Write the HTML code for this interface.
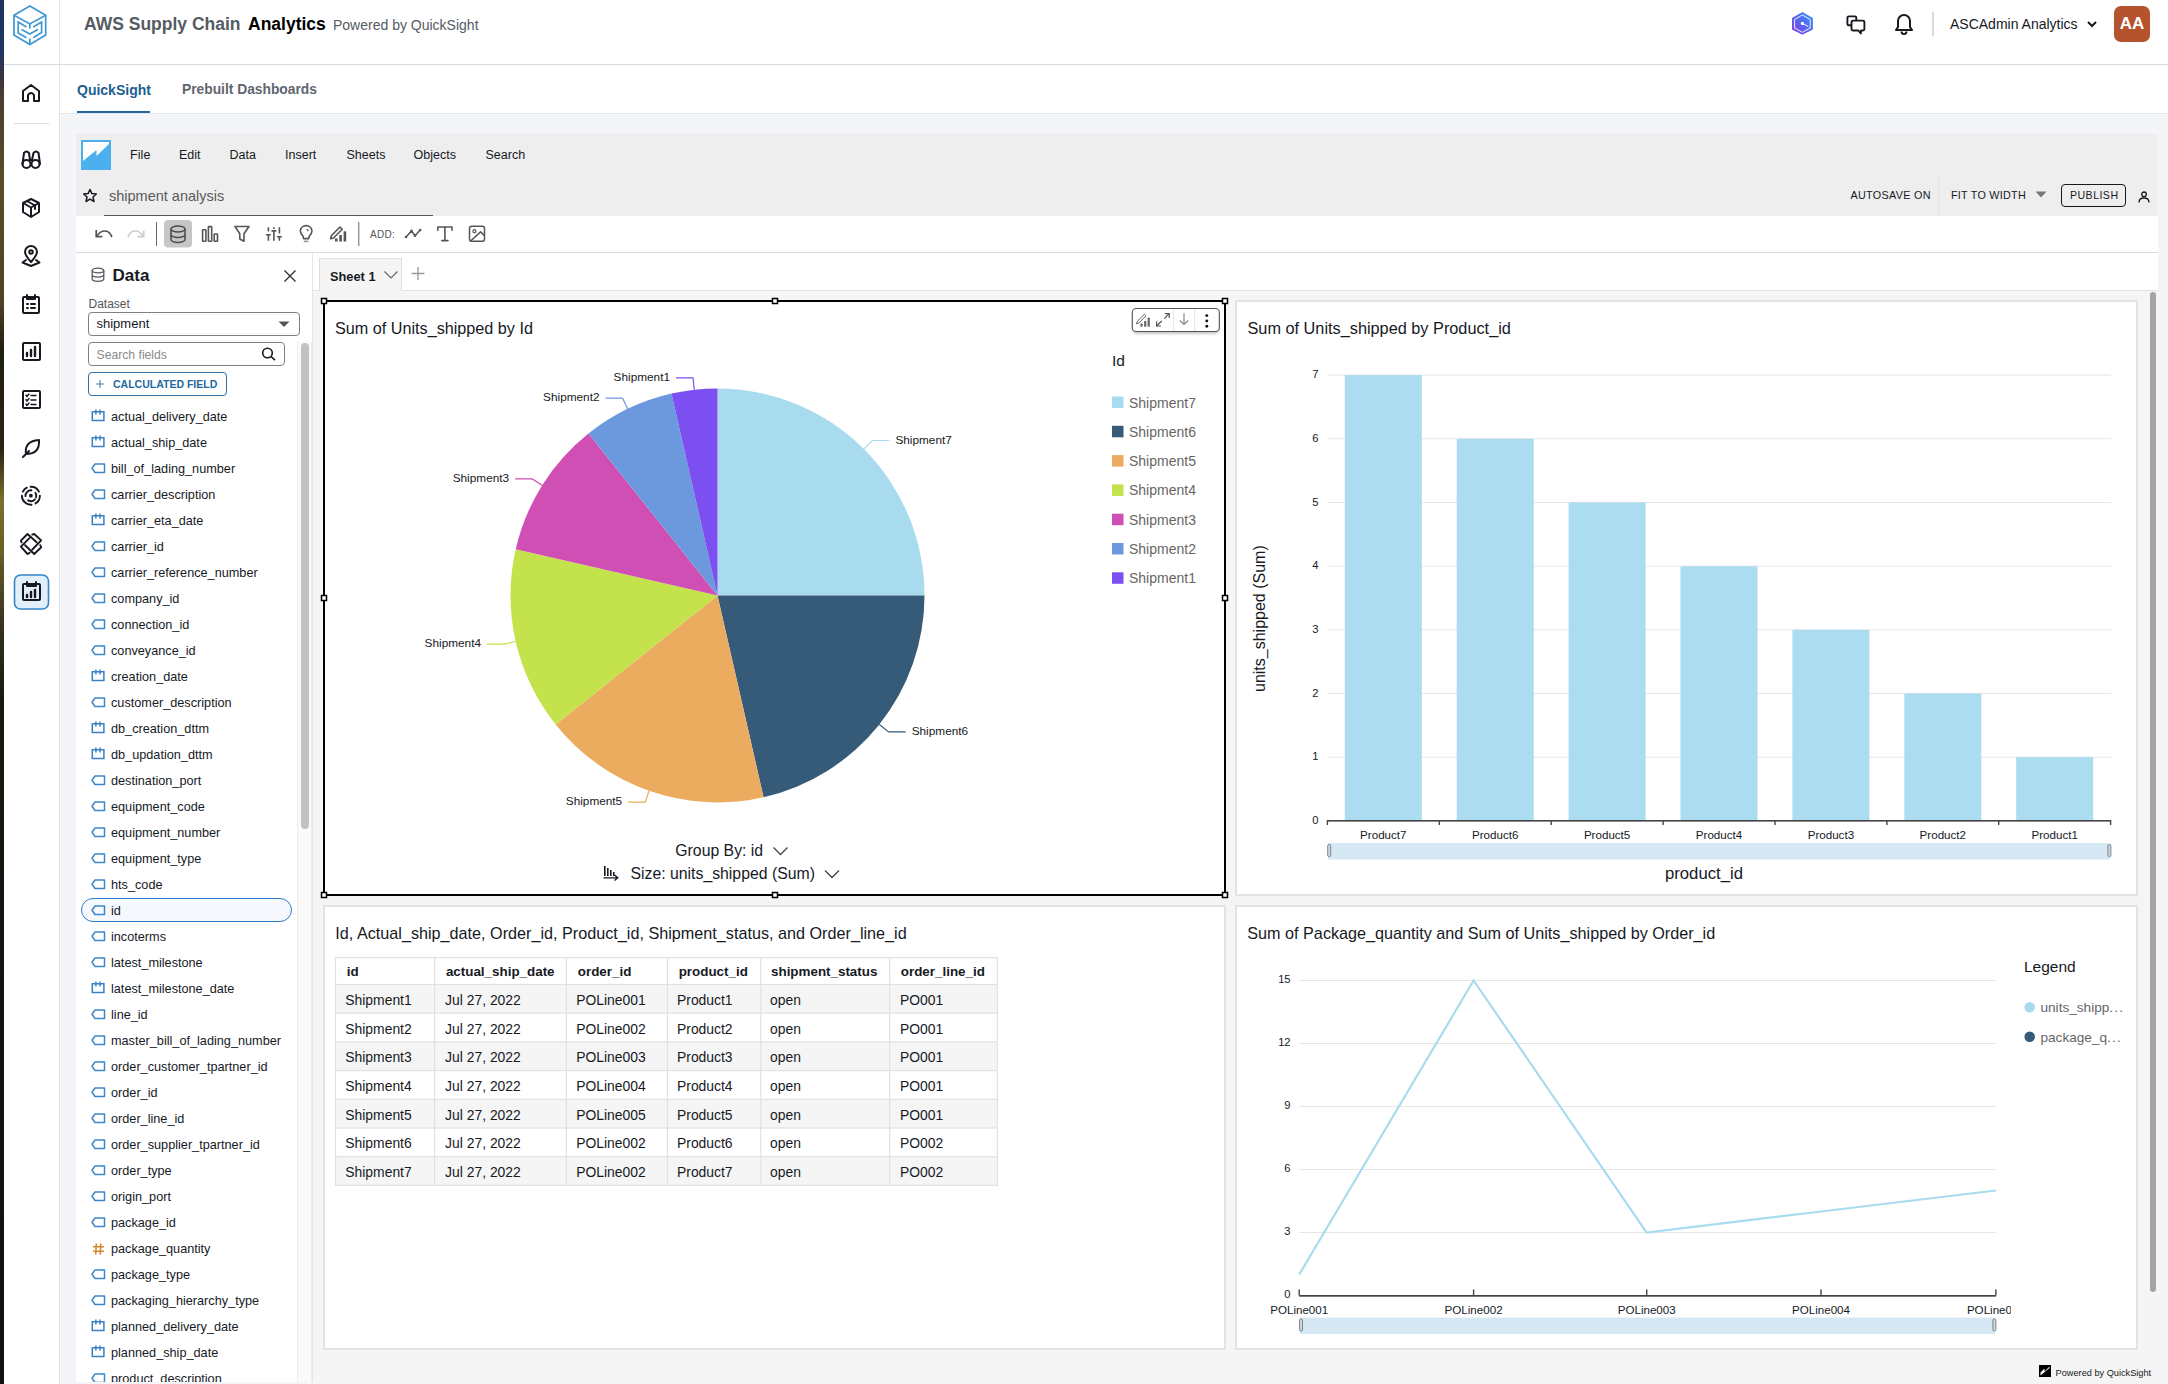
<!DOCTYPE html>
<html><head><meta charset="utf-8">
<style>
*{box-sizing:border-box;margin:0;padding:0}
html,body{width:2168px;height:1384px;overflow:hidden;background:#f4f5f9;font-family:"Liberation Sans",sans-serif;color:#16191f}
.abs{position:absolute}
#strip{left:0;top:0;width:4px;height:1384px;background:linear-gradient(#1e3462 0,#1f3664 52px,#3a3340 75px,#4a3f2e 100px,#5a4c26 180px,#4e4424 300px,#221d12 350px,#2a2414 450px,#7a7030 500px,#6a6028 550px,#3a3520 620px,#1a1810 700px,#15130e 1000px,#121110 1384px)}
#side{left:4px;top:0;width:56px;height:1384px;background:#fff;border-right:1px solid #e1e4e8}
#hdr{left:60px;top:0;width:2108px;height:65px;background:#fff;border-bottom:1px solid #d5dbe1}
#tabs{left:60px;top:65px;width:2108px;height:49px;background:#fff;border-bottom:1px solid #e3e6ea}
.t{position:absolute;white-space:nowrap;line-height:1}
#qs{left:76px;top:134px;width:2082px;height:1248px;background:#f5f5f5}
#menubar{left:0;top:0;width:2082px;height:82px;background:#eeeeee}
#toolbar{left:0;top:82px;width:2082px;height:37px;background:#fff;border-bottom:1px solid #dcdcdc}
#datap{left:0;top:119px;width:237px;height:1129px;background:#fff;border-right:1px solid #e6e6e6}
#sheettop{left:237px;top:119px;width:1845px;height:38px;background:#fff;border-bottom:1px solid #e4e4e4}
.vis{position:absolute;background:#fff;border:2px solid #e3e3e3}
</style></head><body>
<div id="strip" class="abs"></div>
<div id="side" class="abs"></div>
<svg class="abs" style="left:10px;top:2px" width="40" height="48" viewBox="10 2 40 48">
 <g fill="none" stroke="#3d97d3" stroke-width="1.7" stroke-linejoin="miter">
  <path d="M29.8 6 L45.7 15.2 L45.7 35 L29.8 44.5 L14 35 L14 15.2 Z"/>
  <path d="M14 15.2 L29.8 23.9 L45.7 15.2"/>
  <path d="M29.8 23.9 L29.8 28.4 M29.8 38.6 L29.8 44.5"/>
  <path d="M26.5 27 L18.2 22.1 L18.2 32.9 L26.5 37.7"/>
  <path d="M33.2 27 L41.6 22.1 L41.6 32.5 L33.2 37.7"/>
  <path d="M22.1 29.2 L22.1 29.7 L29.8 34.1 L37.4 29.7 L37.4 29"/>
 </g>
</svg>
<svg class="abs" style="left:4px;top:60px" width="56" height="560" viewBox="4 60 56 560">
 <g fill="none" stroke="#16191f" stroke-width="2" stroke-linejoin="round" stroke-linecap="round">
  <path d="M23 101 L23 91 L31 85 L39 91 L39 101 L34 101 L34 95 Q31 91 28 95 L28 101 Z"/>
  <circle cx="26.5" cy="164" r="4"/><circle cx="35.5" cy="164" r="4"/>
  <path d="M22.5 164 L24 153 Q26.5 150 29 153 L30 160 M40 164 L38.5 153 Q36 150 33.5 153 L32 160 M30 160 L32 160"/>
  <path d="M31 199 L39 203 L39 212 L31 217 L23 212 L23 203 Z M23 203 L31 207.5 L39 203 M31 207.5 L31 217 M27 201 L35 205.5 L35 209"/>
  <path d="M31 262 Q25 255 25 252 A6 6 0 0 1 37 252 Q37 255 31 262 Z"/><circle cx="31" cy="252" r="1.8"/>
  <path d="M26 260 L22.5 262.5 L31 266 L39.5 262.5 L36 260"/>
  <rect x="23" y="297" width="16" height="16" rx="1"/><path d="M27 295 L27 299 L35 299 L35 295 M27 304 L28 304 M31 304 L35 304 M27 308 L28 308 M31 308 L35 308"/>
  <rect x="23" y="343" width="17" height="17" rx="1"/><path d="M27 356 L27 353 M31 356 L31 350 M35 356 L35 347" stroke-width="2.4"/>
  <rect x="23" y="391" width="17" height="17" rx="1"/><path d="M26 395 L27 396.5 L29 394 M26 399.5 L27 401 L29 398.5 M26 404 L27 405.5 L29 403 M31 395.5 L36 395.5 M31 400 L36 400 M31 404.5 L36 404.5" stroke-width="1.4"/>
  <path d="M23 457 L29 451 M26 454 Q24 441 39 440 Q40 454 26 454"/>
  <path d="M22.88 491.61 A9.0 9.0 0 0 1 26.81 487.68 M30.59 486.71 A9.0 9.0 0 0 1 38.92 491.61 M39.90 495.70 A9.0 9.0 0 0 1 35.54 503.41 M31.53 504.68 A9.0 9.0 0 0 1 21.90 495.70 M25.51 496.08 A5.4 5.4 0 0 1 31.37 490.32 M35.43 492.76 A5.4 5.4 0 0 1 36.04 497.37 M34.91 499.31 A5.4 5.4 0 0 1 28.12 500.33" stroke-width="1.9"/><circle cx="30.9" cy="495.7" r="1.9" fill="#16191f" stroke="none"/>
  <path d="M20.9 540.7 L27.5 534 L36.6 542.2 M40.2 545.2 L41.2 547.3 L34.2 554 L25.1 545.2 M21.6 542.3 L20.9 540.7 M32.2 534.6 L34.2 534 L41.2 540.4 L32.4 549.5 M29.7 552.8 L27.5 554 L20.9 546.7 L29.4 538.2" stroke-width="1.9"/>
 </g>
 <rect x="14.5" y="575" width="34" height="34" rx="6" fill="#e1effb" stroke="#3584c8" stroke-width="1.6"/>
 <g fill="none" stroke="#16191f" stroke-width="2" stroke-linejoin="round" stroke-linecap="round">
  <rect x="23" y="584" width="17" height="16" rx="1"/><path d="M27 582 L27 586 L36 586 L36 582"/><path d="M27 597 L27 595 M31 597 L31 592 M35 597 L35 590" stroke-width="2.4"/>
  <path d="M14 123.5 L49 123.5" stroke="#dfe3e8" stroke-width="1"/>
 </g>
</svg>

<div id="hdr" class="abs"></div><div class="abs" style="left:4px;top:64px;width:56px;height:1px;background:#d5dbe1"></div>
<div class="t" style="left:84px;top:16px;font-size:17.5px;font-weight:bold;color:#545b64">AWS Supply Chain</div>
<div class="t" style="left:248px;top:16px;font-size:17.5px;font-weight:bold;color:#000">Analytics</div>
<div class="t" style="left:333px;top:18px;font-size:14px;color:#545b64">Powered by QuickSight</div>
<svg class="abs" style="left:1785px;top:5px" width="140" height="40" viewBox="1785 5 140 40">
 <defs><linearGradient id="hx" x1="1" y1="0" x2="0" y2="1"><stop offset="0" stop-color="#2f9bf5"/><stop offset="0.55" stop-color="#5a62ee"/><stop offset="1" stop-color="#8a3be6"/></linearGradient></defs>
 <path d="M1802.4 12 L1812.9 17.9 L1812.9 29.5 L1802.4 34.8 L1792 29.5 L1792 17.9 Z" fill="url(#hx)"/>
 <path d="M1802.4 15 L1810.2 19.5 L1810.2 28 L1802.4 32.3 L1794.6 28 L1794.6 19.5 Z" fill="none" stroke="#fff" stroke-width="0.9"/>
 <circle cx="1802.4" cy="23.4" r="1.6" fill="#fff"/><path d="M1802.4 23.4 L1808.3 26.6" stroke="#fff" stroke-width="1"/>
 <g fill="#fff" stroke="#16191f" stroke-width="1.9" stroke-linejoin="round">
  <rect x="1847.4" y="16.4" width="8.9" height="8.9" rx="1.3"/>
  <path d="M1853 20.6 L1862.9 20.6 Q1864.4 20.6 1864.4 22.1 L1864.4 29 Q1864.4 30.5 1862.9 30.5 L1861 30.5 L1860.8 33.4 L1858.4 30.5 L1853 30.5 Q1851.5 30.5 1851.5 29 L1851.5 22.1 Q1851.5 20.6 1853 20.6 Z"/>
 </g>
</svg>
<svg class="abs" style="left:1893px;top:12px" width="22" height="24" viewBox="0 0 22 24" fill="none" stroke="#16191f" stroke-width="2" stroke-linejoin="round">
 <path d="M3 18 L5 15 L5 9 A6 6 0 0 1 17 9 L17 15 L19 18 Z"/><path d="M8.5 19.5 A2.5 2.5 0 0 0 13.5 19.5"/>
</svg>
<div class="abs" style="left:1932px;top:12px;width:2px;height:24px;background:#d5dbe1"></div>
<div class="t" style="left:1950px;top:17px;font-size:14px;color:#16191f">ASCAdmin Analytics</div>
<svg class="abs" style="left:2086px;top:19px" width="12" height="10" viewBox="0 0 12 10" fill="none" stroke="#16191f" stroke-width="2"><path d="M2 3 L6 7 L10 3"/></svg>
<div class="abs" style="left:2114px;top:6px;width:36px;height:36px;border-radius:7px;background:#b5532e"></div>
<div class="t" style="left:2114px;top:15px;width:36px;text-align:center;font-size:17px;font-weight:bold;color:#fff">AA</div>

<div id="tabs" class="abs"></div>
<div class="t" style="left:77px;top:83px;font-size:14px;font-weight:bold;color:#1d5e91">QuickSight</div>
<div class="abs" style="left:77px;top:111px;width:73px;height:2px;background:#1f69a3"></div>
<div class="t" style="left:182px;top:83px;font-size:13.8px;font-weight:bold;color:#5f6670">Prebuilt Dashboards</div>

<div id="qs" class="abs">
  <div id="menubar" class="abs">
  <div class="abs" style="left:5px;top:6px;width:30px;height:30px;background:#4db0ee"></div>
  <svg class="abs" style="left:5px;top:6px" width="30" height="30" viewBox="0 0 30 30"><path d="M2 2 L28 2 L28 4 L15.5 16 L15.5 10 L2 21 Z" fill="#fff"/></svg>
  <div class="t" style="left:54px;top:15px;font-size:12.5px;color:#16191f;letter-spacing:0.1px">File</div>
  <div class="t" style="left:103px;top:15px;font-size:12.5px;color:#16191f">Edit</div>
  <div class="t" style="left:153.5px;top:15px;font-size:12.5px;color:#16191f">Data</div>
  <div class="t" style="left:209px;top:15px;font-size:12.5px;color:#16191f">Insert</div>
  <div class="t" style="left:270.5px;top:15px;font-size:12.5px;color:#16191f">Sheets</div>
  <div class="t" style="left:337.5px;top:15px;font-size:12.5px;color:#16191f">Objects</div>
  <div class="t" style="left:409.5px;top:15px;font-size:12.5px;color:#16191f">Search</div>
  <svg class="abs" style="left:6px;top:54px" width="16" height="16" viewBox="0 0 16 16"><path d="M8 1.5 L9.9 5.6 L14.3 6 L11 9 L12 13.5 L8 11.2 L4 13.5 L5 9 L1.7 6 L6.1 5.6 Z" fill="none" stroke="#16191f" stroke-width="1.5" stroke-linejoin="round"/></svg>
  <div class="t" style="left:33px;top:55px;font-size:14.5px;color:#5a5a5a">shipment analysis</div>
  <div class="abs" style="left:28px;top:81px;width:329px;height:1px;background:#555"></div>
  <div class="t" style="left:1774.5px;top:56px;font-size:10.8px;color:#16191f;letter-spacing:0.3px">AUTOSAVE ON</div>
  <div class="abs" style="left:1862px;top:41px;width:1px;height:41px;background:#e4e4e4"></div>
  <div class="t" style="left:1875px;top:56px;font-size:10.8px;color:#16191f;letter-spacing:0.25px">FIT TO WIDTH</div>
  <svg class="abs" style="left:1959px;top:57px" width="12" height="8" viewBox="0 0 12 8"><path d="M0.5 0.5 L11.5 0.5 L6 6.5 Z" fill="#777"/></svg>
  <div class="abs" style="left:1985px;top:50px;width:65px;height:23px;border:1.5px solid #16191f;border-radius:4px"></div>
  <div class="t" style="left:1994px;top:56px;font-size:10.6px;color:#16191f;letter-spacing:0.45px">PUBLISH</div>
  <svg class="abs" style="left:2062px;top:56.5px" width="12" height="12" viewBox="0 0 12 12" fill="none" stroke="#16191f" stroke-width="1.3"><circle cx="6" cy="3.3" r="2.3"/><path d="M1 11.5 Q1 7 6 7 Q11 7 11 11.5"/></svg>
</div>
  <div id="toolbar" class="abs">
 <svg class="abs" style="left:0;top:0" width="500" height="37" viewBox="76 216 500 37">
  <g fill="none" stroke-width="1.7" stroke-linecap="round" stroke-linejoin="round">
   <path d="M96.8 236.2 Q100 231 104.7 231 Q109.5 231 111.6 236.4" stroke="#555"/><path d="M96.2 230.6 L96.2 236.7 L101.6 236.7" stroke="#555"/>
   <path d="M128.3 236.4 Q130.5 231 135.3 231 Q140 231 143.2 236.2" stroke="#ccc"/><path d="M143.7 231 L143.7 236.7 L138.3 236.7" stroke="#ccc"/>
  </g>
  <rect x="156" y="222" width="1" height="24" fill="#6a6a6a"/>
  <rect x="164" y="220" width="28" height="27.5" rx="4" fill="#c6c6c6"/>
  <g fill="none" stroke="#4a4a4a" stroke-width="1.5">
   <ellipse cx="178" cy="229" rx="7" ry="3"/><path d="M171 229 L171 239.5 A7 3 0 0 0 185 239.5 L185 229 M171 234.5 A7 3 0 0 0 185 234.5"/>
  </g>
  <g fill="none" stroke="#555" stroke-width="1.6" stroke-linejoin="round">
   <rect x="202.6" y="229.8" width="3.3" height="11.5" rx="0.5"/><rect x="208.4" y="226.6" width="3.3" height="14.7" rx="0.5"/><rect x="214.2" y="234" width="3.3" height="7.3" rx="0.5"/>
   <path d="M235 226.5 L249 226.5 L244 233.8 L244 241.3 L239.8 239 L239.8 233.8 Z"/>
   <path d="M268.4 227.3 L268.4 231.5 M266 234.8 L270.8 234.8 M268.4 234.8 L268.4 240.8 M273.9 227.3 L273.9 229 M271.5 230.9 L276.3 230.9 M273.9 230.9 L273.9 240.8 M279.4 227.3 L279.4 233.5 M277 236.8 L281.8 236.8 M279.4 236.8 L279.4 240.8" stroke-linecap="butt"/>
   <path d="M303.6 238.6 L303 236 Q300.3 233.5 300.3 230.8 A5.9 5.9 0 0 1 312 230.8 Q312 233.5 309.3 236 L308.7 238.6 Z"/>
   <path d="M303.8 241.4 L308.4 241.4" stroke="#999"/>
   <path d="M306.8 229 L308.3 231.2" stroke-width="1.2"/>
   <path d="M330.6 238.6 L331.3 235.8 L340 227 L342.2 229.2 L333.5 238 Z"/>
  </g>
  <g fill="#555"><rect x="335" y="238.5" width="2.6" height="3"/><rect x="339.3" y="235" width="2.6" height="6.5"/><rect x="343.6" y="231.3" width="2.6" height="10.2"/></g>
  <rect x="358.3" y="222" width="1" height="24" fill="#6a6a6a"/>
  <text x="370" y="238" font-family="Liberation Sans" font-size="10" fill="#555" letter-spacing="0.3">ADD:</text>
  <g fill="none" stroke="#555" stroke-width="1.5" stroke-linejoin="round" stroke-linecap="round">
   <path d="M406 237 L411.5 230.9 L415 235.8 L420.2 230"/>
   <path d="M437.8 230.3 L437.8 227 L452 227 L452 230.3 M444.9 227 L444.9 240.6 M441.8 240.6 L448 240.6" stroke-width="1.6"/>
   <rect x="469.5" y="226.3" width="15" height="15" rx="2.3"/><circle cx="474.4" cy="231.2" r="1.5" stroke-width="1.2"/><path d="M470.6 241 L480.6 231.9 L484.3 235.4"/>
  </g>
  <g fill="#555"><circle cx="406" cy="237" r="1.3"/><circle cx="411.5" cy="230.9" r="1.3"/><circle cx="415" cy="235.8" r="1.3"/><circle cx="420.2" cy="230" r="1.3"/></g>
 </svg>
</div>
  <div id="datap" class="abs"></div>
  <div id="sheettop" class="abs"></div>
</div>
<div class="vis" style="left:323px;top:300px;width:903px;height:596px;border:2px solid #000"></div>
<div class="vis" style="left:1235px;top:300px;width:903px;height:596px"></div>
<div class="vis" style="left:323px;top:905px;width:903px;height:445px"></div>
<div class="vis" style="left:1235px;top:905px;width:903px;height:445px"></div>
<div class="abs" style="left:76px;top:253px;width:237px;height:1129px;overflow:hidden">
<svg class="abs" style="left:15px;top:14px" width="14" height="16" viewBox="0 0 14 16" fill="none" stroke="#545b64" stroke-width="1.3"><ellipse cx="7" cy="3.5" rx="5.8" ry="2.3"/><path d="M1.2 3.5 L1.2 12 A5.8 2.3 0 0 0 12.8 12 L12.8 3.5 M1.2 7.8 A5.8 2.3 0 0 0 12.8 7.8"/></svg>
<div class="t" style="left:36.5px;top:13.5px;font-size:17px;font-weight:bold;color:#16191f">Data</div>
<svg class="abs" style="left:207px;top:16px" width="14" height="14" viewBox="0 0 14 14" stroke="#333" stroke-width="1.4"><path d="M1.5 1.5 L12.5 12.5 M12.5 1.5 L1.5 12.5"/></svg>
<div class="t" style="left:12.5px;top:45px;font-size:12px;color:#545454">Dataset</div>
<div class="abs" style="left:12px;top:59px;width:212px;height:24px;border:1px solid #808080;border-radius:4px"></div>
<div class="t" style="left:20.5px;top:64px;font-size:13px;color:#16191f">shipment</div>
<svg class="abs" style="left:202px;top:68px" width="12" height="7" viewBox="0 0 12 7"><path d="M0.5 0.5 L11.5 0.5 L6 6 Z" fill="#555"/></svg>
<div class="abs" style="left:12px;top:89px;width:197px;height:24px;border:1px solid #808080;border-radius:4px"></div>
<div class="t" style="left:20.5px;top:95.5px;font-size:12.2px;color:#8a8a8a">Search fields</div>
<svg class="abs" style="left:185px;top:94px" width="16" height="15" viewBox="0 0 16 15" fill="none" stroke="#16191f" stroke-width="1.6"><circle cx="6.5" cy="6" r="4.8"/><path d="M10 9.5 L14 13.2"/></svg>
<div class="abs" style="left:12px;top:119px;width:139px;height:24px;border:1px solid #2f70a3;border-radius:4px"></div>
<svg class="abs" style="left:19px;top:126px" width="10" height="10" viewBox="0 0 10 10" stroke="#4a82ad" stroke-width="1.1"><path d="M5 1 L5 9 M1 5 L9 5"/></svg>
<div class="t" style="left:37px;top:125.7px;font-size:10.5px;font-weight:bold;color:#226a9e;letter-spacing:0px">CALCULATED FIELD</div>
<div class="abs" style="left:221px;top:89px;width:15px;height:1100px;background:#fafafa;border-left:1px solid #ececec;border-right:1px solid #ececec"></div>
<div class="abs" style="left:225px;top:90px;width:8px;height:486px;background:#c1c1c1;border-radius:4px"></div>
<svg class="abs" style="left:15px;top:155.8px" width="15" height="13" viewBox="0 0 15 13" fill="none" stroke="#3a80c2" stroke-width="1.5"><path d="M1.3 2.8 L12.9 2.8 L12.9 11.6 L1.3 11.6 Z M4.9 0.6 L4.9 5.6 M9 0.6 L9 5.6"/></svg>
<div class="t" style="left:35px;top:157.7px;font-size:12.7px;color:#16191f">actual_delivery_date</div>
<svg class="abs" style="left:15px;top:181.8px" width="15" height="13" viewBox="0 0 15 13" fill="none" stroke="#3a80c2" stroke-width="1.5"><path d="M1.3 2.8 L12.9 2.8 L12.9 11.6 L1.3 11.6 Z M4.9 0.6 L4.9 5.6 M9 0.6 L9 5.6"/></svg>
<div class="t" style="left:35px;top:183.7px;font-size:12.7px;color:#16191f">actual_ship_date</div>
<svg class="abs" style="left:15px;top:209.8px" width="15" height="11" viewBox="0 0 15 11" fill="none" stroke="#3d87c9" stroke-width="1.5" stroke-linejoin="round"><path d="M4 1 L13.5 1 L13.5 9.5 L4 9.5 L1 5.25 Z"/></svg>
<div class="t" style="left:35px;top:209.7px;font-size:12.7px;color:#16191f">bill_of_lading_number</div>
<svg class="abs" style="left:15px;top:235.8px" width="15" height="11" viewBox="0 0 15 11" fill="none" stroke="#3d87c9" stroke-width="1.5" stroke-linejoin="round"><path d="M4 1 L13.5 1 L13.5 9.5 L4 9.5 L1 5.25 Z"/></svg>
<div class="t" style="left:35px;top:235.7px;font-size:12.7px;color:#16191f">carrier_description</div>
<svg class="abs" style="left:15px;top:259.8px" width="15" height="13" viewBox="0 0 15 13" fill="none" stroke="#3a80c2" stroke-width="1.5"><path d="M1.3 2.8 L12.9 2.8 L12.9 11.6 L1.3 11.6 Z M4.9 0.6 L4.9 5.6 M9 0.6 L9 5.6"/></svg>
<div class="t" style="left:35px;top:261.69999999999993px;font-size:12.7px;color:#16191f">carrier_eta_date</div>
<svg class="abs" style="left:15px;top:287.8px" width="15" height="11" viewBox="0 0 15 11" fill="none" stroke="#3d87c9" stroke-width="1.5" stroke-linejoin="round"><path d="M4 1 L13.5 1 L13.5 9.5 L4 9.5 L1 5.25 Z"/></svg>
<div class="t" style="left:35px;top:287.69999999999993px;font-size:12.7px;color:#16191f">carrier_id</div>
<svg class="abs" style="left:15px;top:313.8px" width="15" height="11" viewBox="0 0 15 11" fill="none" stroke="#3d87c9" stroke-width="1.5" stroke-linejoin="round"><path d="M4 1 L13.5 1 L13.5 9.5 L4 9.5 L1 5.25 Z"/></svg>
<div class="t" style="left:35px;top:313.69999999999993px;font-size:12.7px;color:#16191f">carrier_reference_number</div>
<svg class="abs" style="left:15px;top:339.8px" width="15" height="11" viewBox="0 0 15 11" fill="none" stroke="#3d87c9" stroke-width="1.5" stroke-linejoin="round"><path d="M4 1 L13.5 1 L13.5 9.5 L4 9.5 L1 5.25 Z"/></svg>
<div class="t" style="left:35px;top:339.69999999999993px;font-size:12.7px;color:#16191f">company_id</div>
<svg class="abs" style="left:15px;top:365.8px" width="15" height="11" viewBox="0 0 15 11" fill="none" stroke="#3d87c9" stroke-width="1.5" stroke-linejoin="round"><path d="M4 1 L13.5 1 L13.5 9.5 L4 9.5 L1 5.25 Z"/></svg>
<div class="t" style="left:35px;top:365.69999999999993px;font-size:12.7px;color:#16191f">connection_id</div>
<svg class="abs" style="left:15px;top:391.8px" width="15" height="11" viewBox="0 0 15 11" fill="none" stroke="#3d87c9" stroke-width="1.5" stroke-linejoin="round"><path d="M4 1 L13.5 1 L13.5 9.5 L4 9.5 L1 5.25 Z"/></svg>
<div class="t" style="left:35px;top:391.69999999999993px;font-size:12.7px;color:#16191f">conveyance_id</div>
<svg class="abs" style="left:15px;top:415.8px" width="15" height="13" viewBox="0 0 15 13" fill="none" stroke="#3a80c2" stroke-width="1.5"><path d="M1.3 2.8 L12.9 2.8 L12.9 11.6 L1.3 11.6 Z M4.9 0.6 L4.9 5.6 M9 0.6 L9 5.6"/></svg>
<div class="t" style="left:35px;top:417.69999999999993px;font-size:12.7px;color:#16191f">creation_date</div>
<svg class="abs" style="left:15px;top:443.8px" width="15" height="11" viewBox="0 0 15 11" fill="none" stroke="#3d87c9" stroke-width="1.5" stroke-linejoin="round"><path d="M4 1 L13.5 1 L13.5 9.5 L4 9.5 L1 5.25 Z"/></svg>
<div class="t" style="left:35px;top:443.69999999999993px;font-size:12.7px;color:#16191f">customer_description</div>
<svg class="abs" style="left:15px;top:467.8px" width="15" height="13" viewBox="0 0 15 13" fill="none" stroke="#3a80c2" stroke-width="1.5"><path d="M1.3 2.8 L12.9 2.8 L12.9 11.6 L1.3 11.6 Z M4.9 0.6 L4.9 5.6 M9 0.6 L9 5.6"/></svg>
<div class="t" style="left:35px;top:469.69999999999993px;font-size:12.7px;color:#16191f">db_creation_dttm</div>
<svg class="abs" style="left:15px;top:493.8px" width="15" height="13" viewBox="0 0 15 13" fill="none" stroke="#3a80c2" stroke-width="1.5"><path d="M1.3 2.8 L12.9 2.8 L12.9 11.6 L1.3 11.6 Z M4.9 0.6 L4.9 5.6 M9 0.6 L9 5.6"/></svg>
<div class="t" style="left:35px;top:495.69999999999993px;font-size:12.7px;color:#16191f">db_updation_dttm</div>
<svg class="abs" style="left:15px;top:521.8px" width="15" height="11" viewBox="0 0 15 11" fill="none" stroke="#3d87c9" stroke-width="1.5" stroke-linejoin="round"><path d="M4 1 L13.5 1 L13.5 9.5 L4 9.5 L1 5.25 Z"/></svg>
<div class="t" style="left:35px;top:521.6999999999999px;font-size:12.7px;color:#16191f">destination_port</div>
<svg class="abs" style="left:15px;top:547.8px" width="15" height="11" viewBox="0 0 15 11" fill="none" stroke="#3d87c9" stroke-width="1.5" stroke-linejoin="round"><path d="M4 1 L13.5 1 L13.5 9.5 L4 9.5 L1 5.25 Z"/></svg>
<div class="t" style="left:35px;top:547.6999999999999px;font-size:12.7px;color:#16191f">equipment_code</div>
<svg class="abs" style="left:15px;top:573.8px" width="15" height="11" viewBox="0 0 15 11" fill="none" stroke="#3d87c9" stroke-width="1.5" stroke-linejoin="round"><path d="M4 1 L13.5 1 L13.5 9.5 L4 9.5 L1 5.25 Z"/></svg>
<div class="t" style="left:35px;top:573.6999999999999px;font-size:12.7px;color:#16191f">equipment_number</div>
<svg class="abs" style="left:15px;top:599.8px" width="15" height="11" viewBox="0 0 15 11" fill="none" stroke="#3d87c9" stroke-width="1.5" stroke-linejoin="round"><path d="M4 1 L13.5 1 L13.5 9.5 L4 9.5 L1 5.25 Z"/></svg>
<div class="t" style="left:35px;top:599.6999999999999px;font-size:12.7px;color:#16191f">equipment_type</div>
<svg class="abs" style="left:15px;top:625.8px" width="15" height="11" viewBox="0 0 15 11" fill="none" stroke="#3d87c9" stroke-width="1.5" stroke-linejoin="round"><path d="M4 1 L13.5 1 L13.5 9.5 L4 9.5 L1 5.25 Z"/></svg>
<div class="t" style="left:35px;top:625.6999999999999px;font-size:12.7px;color:#16191f">hts_code</div>
<div class="abs" style="left:5px;top:645px;width:211px;height:24px;border:1.3px solid #2b7bc4;border-radius:12px;background:#f5f9fe"></div>
<svg class="abs" style="left:15px;top:651.8px" width="15" height="11" viewBox="0 0 15 11" fill="none" stroke="#3d87c9" stroke-width="1.5" stroke-linejoin="round"><path d="M4 1 L13.5 1 L13.5 9.5 L4 9.5 L1 5.25 Z"/></svg>
<div class="t" style="left:35px;top:651.6999999999999px;font-size:12.7px;color:#16191f">id</div>
<svg class="abs" style="left:15px;top:677.8px" width="15" height="11" viewBox="0 0 15 11" fill="none" stroke="#3d87c9" stroke-width="1.5" stroke-linejoin="round"><path d="M4 1 L13.5 1 L13.5 9.5 L4 9.5 L1 5.25 Z"/></svg>
<div class="t" style="left:35px;top:677.6999999999999px;font-size:12.7px;color:#16191f">incoterms</div>
<svg class="abs" style="left:15px;top:703.8px" width="15" height="11" viewBox="0 0 15 11" fill="none" stroke="#3d87c9" stroke-width="1.5" stroke-linejoin="round"><path d="M4 1 L13.5 1 L13.5 9.5 L4 9.5 L1 5.25 Z"/></svg>
<div class="t" style="left:35px;top:703.6999999999999px;font-size:12.7px;color:#16191f">latest_milestone</div>
<svg class="abs" style="left:15px;top:727.8px" width="15" height="13" viewBox="0 0 15 13" fill="none" stroke="#3a80c2" stroke-width="1.5"><path d="M1.3 2.8 L12.9 2.8 L12.9 11.6 L1.3 11.6 Z M4.9 0.6 L4.9 5.6 M9 0.6 L9 5.6"/></svg>
<div class="t" style="left:35px;top:729.6999999999999px;font-size:12.7px;color:#16191f">latest_milestone_date</div>
<svg class="abs" style="left:15px;top:755.8px" width="15" height="11" viewBox="0 0 15 11" fill="none" stroke="#3d87c9" stroke-width="1.5" stroke-linejoin="round"><path d="M4 1 L13.5 1 L13.5 9.5 L4 9.5 L1 5.25 Z"/></svg>
<div class="t" style="left:35px;top:755.6999999999999px;font-size:12.7px;color:#16191f">line_id</div>
<svg class="abs" style="left:15px;top:781.8px" width="15" height="11" viewBox="0 0 15 11" fill="none" stroke="#3d87c9" stroke-width="1.5" stroke-linejoin="round"><path d="M4 1 L13.5 1 L13.5 9.5 L4 9.5 L1 5.25 Z"/></svg>
<div class="t" style="left:35px;top:781.7px;font-size:12.7px;color:#16191f">master_bill_of_lading_number</div>
<svg class="abs" style="left:15px;top:807.8px" width="15" height="11" viewBox="0 0 15 11" fill="none" stroke="#3d87c9" stroke-width="1.5" stroke-linejoin="round"><path d="M4 1 L13.5 1 L13.5 9.5 L4 9.5 L1 5.25 Z"/></svg>
<div class="t" style="left:35px;top:807.7px;font-size:12.7px;color:#16191f">order_customer_tpartner_id</div>
<svg class="abs" style="left:15px;top:833.8px" width="15" height="11" viewBox="0 0 15 11" fill="none" stroke="#3d87c9" stroke-width="1.5" stroke-linejoin="round"><path d="M4 1 L13.5 1 L13.5 9.5 L4 9.5 L1 5.25 Z"/></svg>
<div class="t" style="left:35px;top:833.7px;font-size:12.7px;color:#16191f">order_id</div>
<svg class="abs" style="left:15px;top:859.8px" width="15" height="11" viewBox="0 0 15 11" fill="none" stroke="#3d87c9" stroke-width="1.5" stroke-linejoin="round"><path d="M4 1 L13.5 1 L13.5 9.5 L4 9.5 L1 5.25 Z"/></svg>
<div class="t" style="left:35px;top:859.7px;font-size:12.7px;color:#16191f">order_line_id</div>
<svg class="abs" style="left:15px;top:885.8px" width="15" height="11" viewBox="0 0 15 11" fill="none" stroke="#3d87c9" stroke-width="1.5" stroke-linejoin="round"><path d="M4 1 L13.5 1 L13.5 9.5 L4 9.5 L1 5.25 Z"/></svg>
<div class="t" style="left:35px;top:885.7px;font-size:12.7px;color:#16191f">order_supplier_tpartner_id</div>
<svg class="abs" style="left:15px;top:911.8px" width="15" height="11" viewBox="0 0 15 11" fill="none" stroke="#3d87c9" stroke-width="1.5" stroke-linejoin="round"><path d="M4 1 L13.5 1 L13.5 9.5 L4 9.5 L1 5.25 Z"/></svg>
<div class="t" style="left:35px;top:911.7px;font-size:12.7px;color:#16191f">order_type</div>
<svg class="abs" style="left:15px;top:937.8px" width="15" height="11" viewBox="0 0 15 11" fill="none" stroke="#3d87c9" stroke-width="1.5" stroke-linejoin="round"><path d="M4 1 L13.5 1 L13.5 9.5 L4 9.5 L1 5.25 Z"/></svg>
<div class="t" style="left:35px;top:937.7px;font-size:12.7px;color:#16191f">origin_port</div>
<svg class="abs" style="left:15px;top:963.8px" width="15" height="11" viewBox="0 0 15 11" fill="none" stroke="#3d87c9" stroke-width="1.5" stroke-linejoin="round"><path d="M4 1 L13.5 1 L13.5 9.5 L4 9.5 L1 5.25 Z"/></svg>
<div class="t" style="left:35px;top:963.7px;font-size:12.7px;color:#16191f">package_id</div>
<svg class="abs" style="left:15.5px;top:989.8px" width="13" height="12" viewBox="0 0 13 12" fill="none" stroke="#d5892f" stroke-width="1.6"><path d="M4.3 0.5 L3.7 11.5 M8.8 0.5 L8.2 11.5 M1 3.8 L12 3.8 M1 8.2 L12 8.2"/></svg>
<div class="t" style="left:35px;top:989.7px;font-size:12.7px;color:#16191f">package_quantity</div>
<svg class="abs" style="left:15px;top:1015.8px" width="15" height="11" viewBox="0 0 15 11" fill="none" stroke="#3d87c9" stroke-width="1.5" stroke-linejoin="round"><path d="M4 1 L13.5 1 L13.5 9.5 L4 9.5 L1 5.25 Z"/></svg>
<div class="t" style="left:35px;top:1015.7px;font-size:12.7px;color:#16191f">package_type</div>
<svg class="abs" style="left:15px;top:1041.8px" width="15" height="11" viewBox="0 0 15 11" fill="none" stroke="#3d87c9" stroke-width="1.5" stroke-linejoin="round"><path d="M4 1 L13.5 1 L13.5 9.5 L4 9.5 L1 5.25 Z"/></svg>
<div class="t" style="left:35px;top:1041.7px;font-size:12.7px;color:#16191f">packaging_hierarchy_type</div>
<svg class="abs" style="left:15px;top:1065.8px" width="15" height="13" viewBox="0 0 15 13" fill="none" stroke="#3a80c2" stroke-width="1.5"><path d="M1.3 2.8 L12.9 2.8 L12.9 11.6 L1.3 11.6 Z M4.9 0.6 L4.9 5.6 M9 0.6 L9 5.6"/></svg>
<div class="t" style="left:35px;top:1067.7px;font-size:12.7px;color:#16191f">planned_delivery_date</div>
<svg class="abs" style="left:15px;top:1091.8px" width="15" height="13" viewBox="0 0 15 13" fill="none" stroke="#3a80c2" stroke-width="1.5"><path d="M1.3 2.8 L12.9 2.8 L12.9 11.6 L1.3 11.6 Z M4.9 0.6 L4.9 5.6 M9 0.6 L9 5.6"/></svg>
<div class="t" style="left:35px;top:1093.7px;font-size:12.7px;color:#16191f">planned_ship_date</div>
<svg class="abs" style="left:15px;top:1119.8px" width="15" height="11" viewBox="0 0 15 11" fill="none" stroke="#3d87c9" stroke-width="1.5" stroke-linejoin="round"><path d="M4 1 L13.5 1 L13.5 9.5 L4 9.5 L1 5.25 Z"/></svg>
<div class="t" style="left:35px;top:1119.7px;font-size:12.7px;color:#16191f">product_description</div>
</div>

<div class="abs" style="left:319px;top:258px;width:83px;height:33px;background:#f5f5f5;border:1px solid #dedede;border-bottom:none"></div>
<div class="t" style="left:330px;top:271px;font-size:12.8px;font-weight:bold;color:#16191f">Sheet 1</div>
<svg class="abs" style="left:383px;top:270px" width="16" height="10" viewBox="0 0 16 10" fill="none" stroke="#666" stroke-width="1.2"><path d="M1.5 1.5 L8 8 L14.5 1.5"/></svg>
<svg class="abs" style="left:410px;top:266px" width="16" height="16" viewBox="0 0 16 16" stroke="#999" stroke-width="1.3"><path d="M8 1 L8 14 M1.5 7.5 L14.5 7.5"/></svg>
<svg class="abs" style="left:0;top:0" width="1240" height="900" viewBox="0 0 1240 900" font-family="Liberation Sans">
 <path d="M717.5 595.4 L717.50 388.40 A207 207 0 0 1 924.50 595.40 Z" fill="#a9dbef"/><path d="M717.5 595.4 L924.50 595.40 A207 207 0 0 1 763.56 797.21 Z" fill="#365b78"/><path d="M717.5 595.4 L763.56 797.21 A207 207 0 0 1 555.66 724.46 Z" fill="#ebac5f"/><path d="M717.5 595.4 L555.66 724.46 A207 207 0 0 1 515.69 549.34 Z" fill="#c4e24b"/><path d="M717.5 595.4 L515.69 549.34 A207 207 0 0 1 588.44 433.56 Z" fill="#d04fb4"/><path d="M717.5 595.4 L588.44 433.56 A207 207 0 0 1 671.44 393.59 Z" fill="#6c99dd"/><path d="M717.5 595.4 L671.44 393.59 A207 207 0 0 1 717.50 388.40 Z" fill="#7c4ff1"/>
 <path d="M863.9 449.0 L872.4 440.5 L889.4 440.5" fill="none" stroke="#a9dbef" stroke-width="1.2"/><text x="895.4" y="443.8" font-size="11.8" fill="#16191f" text-anchor="start">Shipment7</text><path d="M879.3 724.5 L888.7 731.9 L905.7 731.9" fill="none" stroke="#365b78" stroke-width="1.2"/><text x="911.7" y="735.2" font-size="11.8" fill="#16191f" text-anchor="start">Shipment6</text><path d="M649.1 790.8 L645.2 802.1 L628.2 802.1" fill="none" stroke="#ebac5f" stroke-width="1.2"/><text x="622.2" y="805.4" font-size="11.8" fill="#16191f" text-anchor="end">Shipment5</text><path d="M515.7 641.5 L504.0 644.1 L487.0 644.1" fill="none" stroke="#c4e24b" stroke-width="1.2"/><text x="481.0" y="647.4" font-size="11.8" fill="#16191f" text-anchor="end">Shipment4</text><path d="M542.2 485.3 L532.1 478.9 L515.1 478.9" fill="none" stroke="#d04fb4" stroke-width="1.2"/><text x="509.1" y="482.2" font-size="11.8" fill="#16191f" text-anchor="end">Shipment3</text><path d="M627.7 408.9 L622.5 398.1 L605.5 398.1" fill="none" stroke="#6c99dd" stroke-width="1.2"/><text x="599.5" y="401.4" font-size="11.8" fill="#16191f" text-anchor="end">Shipment2</text><path d="M694.3 389.7 L693.0 377.8 L676.0 377.8" fill="none" stroke="#7c4ff1" stroke-width="1.2"/><text x="670.0" y="381.1" font-size="11.8" fill="#16191f" text-anchor="end">Shipment1</text>
 <text x="1112" y="366" font-size="15.5" fill="#16191f">Id</text>
 <rect x="1112" y="396.5" width="11.5" height="11.5" fill="#a9dbef"/><text x="1129" y="407.5" font-size="14" fill="#666">Shipment7</text><rect x="1112" y="425.8" width="11.5" height="11.5" fill="#365b78"/><text x="1129" y="436.8" font-size="14" fill="#666">Shipment6</text><rect x="1112" y="455.1" width="11.5" height="11.5" fill="#ebac5f"/><text x="1129" y="466.1" font-size="14" fill="#666">Shipment5</text><rect x="1112" y="484.4" width="11.5" height="11.5" fill="#c4e24b"/><text x="1129" y="495.4" font-size="14" fill="#666">Shipment4</text><rect x="1112" y="513.7" width="11.5" height="11.5" fill="#d04fb4"/><text x="1129" y="524.7" font-size="14" fill="#666">Shipment3</text><rect x="1112" y="543.0" width="11.5" height="11.5" fill="#6c99dd"/><text x="1129" y="554.0" font-size="14" fill="#666">Shipment2</text><rect x="1112" y="572.3" width="11.5" height="11.5" fill="#7c4ff1"/><text x="1129" y="583.3" font-size="14" fill="#666">Shipment1</text>
 <text x="335" y="334" font-size="16.2" fill="#16191f">Sum of Units_shipped by Id</text>
 <text x="675.3" y="856" font-size="15.8" fill="#16191f">Group By: id</text>
 <path d="M773.5 847.5 L780.5 854.5 L787.5 847.5" fill="none" stroke="#444" stroke-width="1.3"/>
 <text x="630.5" y="879" font-size="15.8" fill="#16191f">Size: units_shipped (Sum)</text>
 <path d="M825 870.5 L832 877.5 L839 870.5" fill="none" stroke="#444" stroke-width="1.3"/>
 <g fill="#16191f"><rect x="604" y="866" width="1.6" height="10"/><rect x="607" y="868" width="1.6" height="8"/><rect x="610" y="870" width="1.6" height="6"/><rect x="613" y="872" width="1.6" height="4"/></g>
 <path d="M603.5 877.8 L617.5 877.8 M614.5 875 L617.8 877.8 L614.5 880.6" fill="none" stroke="#16191f" stroke-width="1.3"/>
 <g>
  <defs><filter id="shb" x="-20%" y="-50%" width="140%" height="200%"><feGaussianBlur stdDeviation="1.6"/></filter></defs><rect x="1133" y="310.5" width="86" height="23" rx="4" fill="#000" opacity="0.28" filter="url(#shb)"/><rect x="1132.3" y="308.5" width="87" height="23" rx="3.8" fill="#fff" stroke="#555" stroke-width="1.1"/>
  <path d="M1173.7 309.2 L1173.7 331 M1194.6 309.2 L1194.6 331" stroke="#e0e0e0" stroke-width="0.9"/>
  <g fill="none" stroke="#666" stroke-width="1" stroke-linejoin="round">
   <path d="M1136.4 323.8 L1137.4 321.2 L1144.4 314.3 L1146 315.9 L1139 322.8 Z"/>
  </g>
  <g fill="#666"><rect x="1140.4" y="323.5" width="2.2" height="3.2" rx="0.8"/><rect x="1144.1" y="321" width="2.2" height="5.7" rx="0.5"/><rect x="1147.6" y="317.4" width="2.2" height="9.3" rx="0.5"/></g>
  <g fill="none" stroke="#555" stroke-width="1.2" stroke-linecap="butt">
   <path d="M1156.6 326 L1161.7 321 M1164.3 318.6 L1169.2 313.6"/>
   <path d="M1156.6 321.5 L1156.6 326 L1161 326 M1164.8 313.6 L1169.2 313.6 L1169.2 318"/>
  </g>
  <path d="M1184 313.2 L1184 324.5 M1179.8 320.5 L1184 324.5 L1188.2 320.5" fill="none" stroke="#8a8a8a" stroke-width="1.2"/>
  <g fill="#111"><circle cx="1206.8" cy="315.6" r="1.45"/><circle cx="1206.8" cy="321" r="1.45"/><circle cx="1206.8" cy="326.3" r="1.45"/></g>
 <g fill="#fff" stroke="#000" stroke-width="1.5">
  <rect x="321.5" y="298.5" width="5" height="5"/><rect x="772.5" y="298.5" width="5" height="5"/><rect x="1222.5" y="298.5" width="5" height="5"/>
  <rect x="321.5" y="595.5" width="5" height="5"/><rect x="1222.5" y="595.5" width="5" height="5"/>
  <rect x="321.5" y="892.5" width="5" height="5"/><rect x="772.5" y="892.5" width="5" height="5"/><rect x="1222.5" y="892.5" width="5" height="5"/>
 </g>
</svg>

<svg class="abs" style="left:0;top:0" width="2168" height="1384" viewBox="0 0 2168 1384" font-family="Liberation Sans">
<text x="1247.5" y="334" font-size="16.3" fill="#16191f">Sum of Units_shipped by Product_id</text>
<text x="1318.5" y="823.9" font-size="11.2" fill="#16191f" text-anchor="end">0</text>
<rect x="1328" y="756.7" width="783" height="1" fill="#e6e6e6"/>
<text x="1318.5" y="760.2" font-size="11.2" fill="#16191f" text-anchor="end">1</text>
<rect x="1328" y="693.0" width="783" height="1" fill="#e6e6e6"/>
<text x="1318.5" y="696.5" font-size="11.2" fill="#16191f" text-anchor="end">2</text>
<rect x="1328" y="629.3" width="783" height="1" fill="#e6e6e6"/>
<text x="1318.5" y="632.8" font-size="11.2" fill="#16191f" text-anchor="end">3</text>
<rect x="1328" y="565.7" width="783" height="1" fill="#e6e6e6"/>
<text x="1318.5" y="569.2" font-size="11.2" fill="#16191f" text-anchor="end">4</text>
<rect x="1328" y="502.0" width="783" height="1" fill="#e6e6e6"/>
<text x="1318.5" y="505.5" font-size="11.2" fill="#16191f" text-anchor="end">5</text>
<rect x="1328" y="438.3" width="783" height="1" fill="#e6e6e6"/>
<text x="1318.5" y="441.8" font-size="11.2" fill="#16191f" text-anchor="end">6</text>
<rect x="1328" y="374.6" width="783" height="1" fill="#e6e6e6"/>
<text x="1318.5" y="378.1" font-size="11.2" fill="#16191f" text-anchor="end">7</text>
<rect x="1344.8" y="375.1" width="77" height="445.8" fill="#acdcf0"/>
<text x="1383.3" y="839" font-size="11.6" fill="#16191f" text-anchor="middle">Product7</text>
<rect x="1456.7" y="438.8" width="77" height="382.1" fill="#acdcf0"/>
<text x="1495.2" y="839" font-size="11.6" fill="#16191f" text-anchor="middle">Product6</text>
<rect x="1568.6" y="502.5" width="77" height="318.4" fill="#acdcf0"/>
<text x="1607.1" y="839" font-size="11.6" fill="#16191f" text-anchor="middle">Product5</text>
<rect x="1680.5" y="566.2" width="77" height="254.7" fill="#acdcf0"/>
<text x="1719.0" y="839" font-size="11.6" fill="#16191f" text-anchor="middle">Product4</text>
<rect x="1792.4" y="629.8" width="77" height="191.1" fill="#acdcf0"/>
<text x="1830.9" y="839" font-size="11.6" fill="#16191f" text-anchor="middle">Product3</text>
<rect x="1904.3" y="693.5" width="77" height="127.4" fill="#acdcf0"/>
<text x="1942.8" y="839" font-size="11.6" fill="#16191f" text-anchor="middle">Product2</text>
<rect x="2016.2" y="757.2" width="77" height="63.7" fill="#acdcf0"/>
<text x="2054.7" y="839" font-size="11.6" fill="#16191f" text-anchor="middle">Product1</text>
<rect x="1327.4" y="820" width="783.2" height="1.6" fill="#444"/>
<rect x="1326.7" y="820" width="1.4" height="5" fill="#444"/>
<rect x="1438.6" y="820" width="1.4" height="5" fill="#444"/>
<rect x="1550.5" y="820" width="1.4" height="5" fill="#444"/>
<rect x="1662.4" y="820" width="1.4" height="5" fill="#444"/>
<rect x="1774.3" y="820" width="1.4" height="5" fill="#444"/>
<rect x="1886.2" y="820" width="1.4" height="5" fill="#444"/>
<rect x="1998.0" y="820" width="1.4" height="5" fill="#444"/>
<rect x="2109.9" y="820" width="1.4" height="5" fill="#444"/>
<rect x="1328" y="843" width="782" height="16.5" fill="#d5e8f4"/>
<rect x="1327.7" y="844.5" width="3" height="12" rx="1.3" fill="#d0d8de" stroke="#6d7a85" stroke-width="0.9"/>
<rect x="2107.9" y="844.5" width="3" height="12" rx="1.3" fill="#d0d8de" stroke="#6d7a85" stroke-width="0.9"/>
<text x="1665" y="879" font-size="16.7" fill="#16191f">product_id</text>
<text transform="translate(1264.5 692) rotate(-90)" font-size="16" fill="#16191f">units_shipped (Sum)</text>
</svg>
<svg class="abs" style="left:0;top:0" width="2168" height="1384" viewBox="0 0 2168 1384" font-family="Liberation Sans">
<text x="335.3" y="939" font-size="16.2" fill="#16191f">Id, Actual_ship_date, Order_id, Product_id, Shipment_status, and Order_line_id</text>
<rect x="335.5" y="984.4" width="661.8" height="28.7" fill="#f5f5f5"/>
<rect x="335.5" y="1013.1" width="661.8" height="28.7" fill="#ffffff"/>
<rect x="335.5" y="1041.8" width="661.8" height="28.7" fill="#f5f5f5"/>
<rect x="335.5" y="1070.5" width="661.8" height="28.7" fill="#ffffff"/>
<rect x="335.5" y="1099.2" width="661.8" height="28.7" fill="#f5f5f5"/>
<rect x="335.5" y="1127.9" width="661.8" height="28.7" fill="#ffffff"/>
<rect x="335.5" y="1156.6" width="661.8" height="28.7" fill="#f5f5f5"/>
<rect x="335.0" y="957.0" width="662.8" height="1.2" fill="#e1e1e1"/>
<rect x="335.0" y="983.9" width="662.8" height="1.2" fill="#e1e1e1"/>
<rect x="335.0" y="1012.6" width="662.8" height="1.2" fill="#e1e1e1"/>
<rect x="335.0" y="1041.3" width="662.8" height="1.2" fill="#e1e1e1"/>
<rect x="335.0" y="1070.0" width="662.8" height="1.2" fill="#e1e1e1"/>
<rect x="335.0" y="1098.7" width="662.8" height="1.2" fill="#e1e1e1"/>
<rect x="335.0" y="1127.4" width="662.8" height="1.2" fill="#e1e1e1"/>
<rect x="335.0" y="1156.1" width="662.8" height="1.2" fill="#e1e1e1"/>
<rect x="335.0" y="1184.8" width="662.8" height="1.2" fill="#e1e1e1"/>
<rect x="334.9" y="957.0" width="1.2" height="228.8" fill="#e1e1e1"/>
<rect x="434.0" y="957.0" width="1.2" height="228.8" fill="#e1e1e1"/>
<rect x="565.8" y="957.0" width="1.2" height="228.8" fill="#e1e1e1"/>
<rect x="666.9" y="957.0" width="1.2" height="228.8" fill="#e1e1e1"/>
<rect x="760.2" y="957.0" width="1.2" height="228.8" fill="#e1e1e1"/>
<rect x="889.1" y="957.0" width="1.2" height="228.8" fill="#e1e1e1"/>
<rect x="996.7" y="957.0" width="1.2" height="228.8" fill="#e1e1e1"/>
<text x="346.7" y="976" font-size="13.4" font-weight="bold" fill="#16191f">id</text>
<text x="445.9" y="976" font-size="13.4" font-weight="bold" fill="#16191f">actual_ship_date</text>
<text x="577.8" y="976" font-size="13.4" font-weight="bold" fill="#16191f">order_id</text>
<text x="678.7" y="976" font-size="13.4" font-weight="bold" fill="#16191f">product_id</text>
<text x="771" y="976" font-size="13.4" font-weight="bold" fill="#16191f">shipment_status</text>
<text x="900.8" y="976" font-size="13.4" font-weight="bold" fill="#16191f">order_line_id</text>
<text x="345.3" y="1004.8" font-size="13.9" fill="#16191f">Shipment1</text>
<text x="445.1" y="1004.8" font-size="13.9" fill="#16191f">Jul 27, 2022</text>
<text x="576.2" y="1004.8" font-size="13.9" fill="#16191f">POLine001</text>
<text x="677" y="1004.8" font-size="13.9" fill="#16191f">Product1</text>
<text x="770" y="1004.8" font-size="13.9" fill="#16191f">open</text>
<text x="900" y="1004.8" font-size="13.9" fill="#16191f">PO001</text>
<text x="345.3" y="1033.5" font-size="13.9" fill="#16191f">Shipment2</text>
<text x="445.1" y="1033.5" font-size="13.9" fill="#16191f">Jul 27, 2022</text>
<text x="576.2" y="1033.5" font-size="13.9" fill="#16191f">POLine002</text>
<text x="677" y="1033.5" font-size="13.9" fill="#16191f">Product2</text>
<text x="770" y="1033.5" font-size="13.9" fill="#16191f">open</text>
<text x="900" y="1033.5" font-size="13.9" fill="#16191f">PO001</text>
<text x="345.3" y="1062.2" font-size="13.9" fill="#16191f">Shipment3</text>
<text x="445.1" y="1062.2" font-size="13.9" fill="#16191f">Jul 27, 2022</text>
<text x="576.2" y="1062.2" font-size="13.9" fill="#16191f">POLine003</text>
<text x="677" y="1062.2" font-size="13.9" fill="#16191f">Product3</text>
<text x="770" y="1062.2" font-size="13.9" fill="#16191f">open</text>
<text x="900" y="1062.2" font-size="13.9" fill="#16191f">PO001</text>
<text x="345.3" y="1090.9" font-size="13.9" fill="#16191f">Shipment4</text>
<text x="445.1" y="1090.9" font-size="13.9" fill="#16191f">Jul 27, 2022</text>
<text x="576.2" y="1090.9" font-size="13.9" fill="#16191f">POLine004</text>
<text x="677" y="1090.9" font-size="13.9" fill="#16191f">Product4</text>
<text x="770" y="1090.9" font-size="13.9" fill="#16191f">open</text>
<text x="900" y="1090.9" font-size="13.9" fill="#16191f">PO001</text>
<text x="345.3" y="1119.6" font-size="13.9" fill="#16191f">Shipment5</text>
<text x="445.1" y="1119.6" font-size="13.9" fill="#16191f">Jul 27, 2022</text>
<text x="576.2" y="1119.6" font-size="13.9" fill="#16191f">POLine005</text>
<text x="677" y="1119.6" font-size="13.9" fill="#16191f">Product5</text>
<text x="770" y="1119.6" font-size="13.9" fill="#16191f">open</text>
<text x="900" y="1119.6" font-size="13.9" fill="#16191f">PO001</text>
<text x="345.3" y="1148.3" font-size="13.9" fill="#16191f">Shipment6</text>
<text x="445.1" y="1148.3" font-size="13.9" fill="#16191f">Jul 27, 2022</text>
<text x="576.2" y="1148.3" font-size="13.9" fill="#16191f">POLine002</text>
<text x="677" y="1148.3" font-size="13.9" fill="#16191f">Product6</text>
<text x="770" y="1148.3" font-size="13.9" fill="#16191f">open</text>
<text x="900" y="1148.3" font-size="13.9" fill="#16191f">PO002</text>
<text x="345.3" y="1177.0" font-size="13.9" fill="#16191f">Shipment7</text>
<text x="445.1" y="1177.0" font-size="13.9" fill="#16191f">Jul 27, 2022</text>
<text x="576.2" y="1177.0" font-size="13.9" fill="#16191f">POLine002</text>
<text x="677" y="1177.0" font-size="13.9" fill="#16191f">Product7</text>
<text x="770" y="1177.0" font-size="13.9" fill="#16191f">open</text>
<text x="900" y="1177.0" font-size="13.9" fill="#16191f">PO002</text>
<text x="1247.3" y="939" font-size="16.2" fill="#16191f">Sum of Package_quantity and Sum of Units_shipped by Order_id</text>
<text x="1290.6" y="1298.1" font-size="11.2" fill="#16191f" text-anchor="end">0</text>
<rect x="1299.2" y="1232.0" width="696.7" height="1" fill="#e6e6e6"/>
<text x="1290.6" y="1235.1" font-size="11.2" fill="#16191f" text-anchor="end">3</text>
<rect x="1299.2" y="1169.0" width="696.7" height="1" fill="#e6e6e6"/>
<text x="1290.6" y="1172.1" font-size="11.2" fill="#16191f" text-anchor="end">6</text>
<rect x="1299.2" y="1106.0" width="696.7" height="1" fill="#e6e6e6"/>
<text x="1290.6" y="1109.1" font-size="11.2" fill="#16191f" text-anchor="end">9</text>
<rect x="1299.2" y="1043.0" width="696.7" height="1" fill="#e6e6e6"/>
<text x="1290.6" y="1046.1" font-size="11.2" fill="#16191f" text-anchor="end">12</text>
<rect x="1299.2" y="980.0" width="696.7" height="1" fill="#e6e6e6"/>
<text x="1290.6" y="983.1" font-size="11.2" fill="#16191f" text-anchor="end">15</text>
<rect x="1299.2" y="1295" width="696.7" height="1.7" fill="#444"/>
<rect x="1298.5" y="1289.5" width="1.4" height="6" fill="#444"/>
<rect x="1472.9" y="1289.5" width="1.4" height="6" fill="#444"/>
<rect x="1646.0" y="1289.5" width="1.4" height="6" fill="#444"/>
<rect x="1820.3" y="1289.5" width="1.4" height="6" fill="#444"/>
<rect x="1995.2" y="1289.5" width="1.4" height="6" fill="#444"/>
<text x="1299.2" y="1314" font-size="11.6" fill="#16191f" text-anchor="middle">POLine001</text>
<text x="1473.6" y="1314" font-size="11.6" fill="#16191f" text-anchor="middle">POLine002</text>
<text x="1646.7" y="1314" font-size="11.6" fill="#16191f" text-anchor="middle">POLine003</text>
<text x="1821" y="1314" font-size="11.6" fill="#16191f" text-anchor="middle">POLine004</text>
<defs><clipPath id="clp"><rect x="1230" y="1290" width="781" height="40"/></clipPath></defs>
<text x="1995.9" y="1314" font-size="11.6" fill="#16191f" text-anchor="middle" clip-path="url(#clp)">POLine005</text>
<polyline points="1299.2,1274.5 1473.6,980.5 1646.7,1232.5 1821.0,1211.5 1995.9,1190.5" fill="none" stroke="#a9dbef" stroke-width="2.2" stroke-linejoin="miter"/>
<rect x="1300" y="1317.6" width="695" height="16.5" fill="#d5e8f4"/>
<rect x="1299.5" y="1319" width="3" height="12" rx="1.3" fill="#d0d8de" stroke="#6d7a85" stroke-width="0.9"/>
<rect x="1992.9" y="1319" width="3" height="12" rx="1.3" fill="#d0d8de" stroke="#6d7a85" stroke-width="0.9"/>
<text x="2024" y="971.5" font-size="15.5" fill="#16191f">Legend</text>
<circle cx="2029.7" cy="1007.3" r="5.3" fill="#a9dbef"/>
<text x="2040.5" y="1012.2" font-size="13.6" fill="#666">units_shipp<tspan letter-spacing="1.2">...</tspan></text>
<circle cx="2029.7" cy="1036.7" r="5.3" fill="#365b78"/>
<text x="2040.5" y="1041.6" font-size="13.6" fill="#666">package_q<tspan letter-spacing="1.2">...</tspan></text>
<rect x="2150" y="292" width="6" height="1000" rx="3" fill="#a4a4a4"/>
<rect x="2039" y="1365" width="12" height="12" fill="#000"/><path d="M2040.5 1375.5 L2040.5 1372.5 L2044.5 1368.5 L2044.5 1371.5 L2049.5 1366.5 L2049.5 1368 Z" fill="#fff"/>
<text x="2055.6" y="1375.6" font-size="9.2" fill="#16191f">Powered by QuickSight</text>
</svg>
</body></html>
